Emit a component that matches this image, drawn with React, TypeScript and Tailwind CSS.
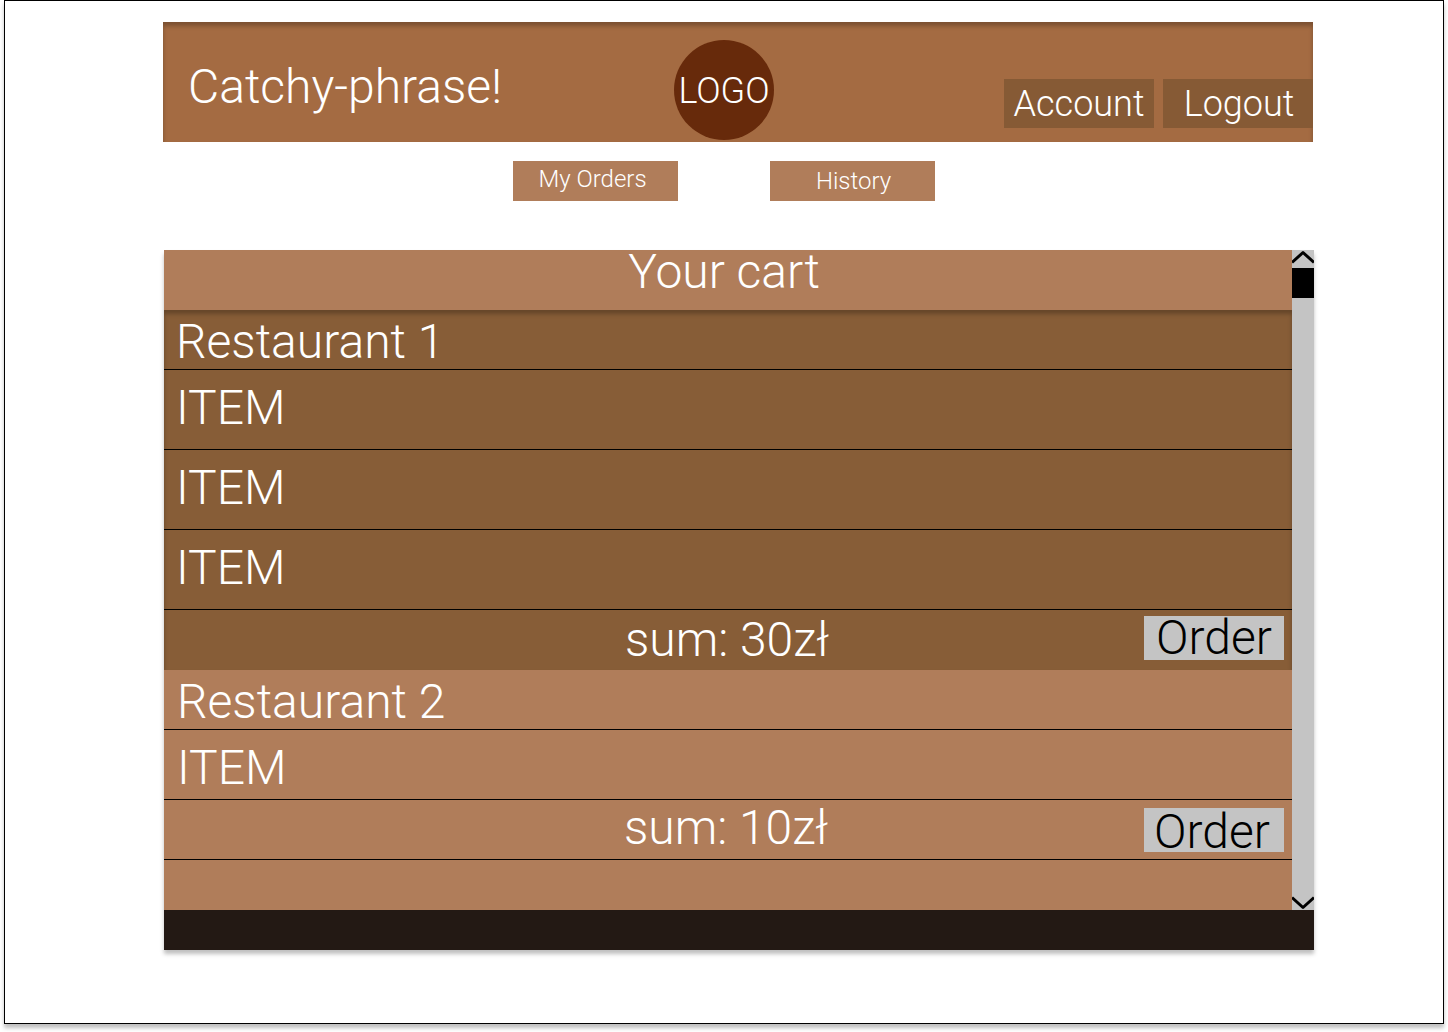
import React from "react";

function Item({ compact = false }: { compact?: boolean }) {
  return (
    <li className={`flex items-center border-b border-black text-5xl ${compact ? "h-[70px] pt-1.5 pl-[13px]" : "h-20 pb-1 pl-3"}`}>ITEM</li>
  );
}

function OrderButton({ label, className }: { label: string; className: string }) {
  return (
    <button type="button" aria-label={label} className={`flex h-11 w-[140px] items-center justify-center justify-self-end bg-[#c4c4c4] text-5xl leading-none text-black ${className}`}>
      Order
    </button>
  );
}

function Chevron({ down = false }: { down?: boolean }) {
  return (
    <svg viewBox="0 0 22 14" className="h-3.5 w-[22px]" fill="none" stroke="black" strokeWidth="3" strokeLinejoin="round">
      <path d={down ? "M0 1.5L11 11.5L22 1.5" : "M0 12.5L11 2.5L22 12.5"} />
    </svg>
  );
}

export default function App() {
  return (
    <div className="pr-1 pl-1 pb-2 font-['Roboto',sans-serif] font-light text-white">
      <div className="flex min-h-[1024px] flex-col border border-black bg-white pt-[21px] shadow-[0_4px_4px_rgba(0,0,0,0.25)]">
        <header className="mr-[130px] ml-[158px] grid h-[120px] grid-cols-[1fr_128px_1fr] bg-[#a46b42] shadow-[inset_0_4px_4px_rgba(0,0,0,0.25)]">
          <h1 className="pt-8 pl-[25px] text-5xl leading-[66px]">Catchy-phrase!</h1>
          <div className="mt-[18px] flex size-[100px] items-center justify-center rounded-full bg-[#672a0b] pt-0.5 text-4xl">LOGO</div>
          <nav className="mt-[57px] flex justify-end gap-[9px] text-4xl">
            <button type="button" className="h-[49px] w-[150px] bg-[#865a35]">Account</button>
            <button type="button" className="h-[49px] w-[150px] bg-[#865a35] pl-0.5">Logout</button>
          </nav>
        </header>
        <nav className="mt-[19px] flex justify-center gap-[92px] text-2xl">
          <button type="button" className="h-10 w-[165px] bg-[#b07d5a] pr-1.5 pb-1">My Orders</button>
          <button type="button" className="h-10 w-[165px] bg-[#b07d5a] pl-0.5">History</button>
        </nav>
        <main className="mt-[49px] mr-[129px] ml-[159px] shadow-[0_4px_4px_rgba(0,0,0,0.25)]">
          <div className="flex">
            <div className="flex-1 bg-[#b07d5a]">
              <h2 className="h-[60px] pr-2 text-center text-5xl leading-[44px]">Your cart</h2>
              <section className="bg-[#875d37] shadow-[inset_0_4px_4px_rgba(0,0,0,0.25)]">
                <h3 className="h-[60px] border-b border-black pl-3 text-5xl leading-[64px]">Restaurant 1</h3>
                <ul><Item /><Item /><Item /></ul>
                <div className="grid h-[60px] grid-cols-[1fr_auto_1fr] items-center pr-2 pl-1.5 text-5xl">
                  <p className="col-start-2">sum: 30zł</p>
                  <OrderButton label="Order from Restaurant 1" className="mb-1" />
                </div>
              </section>
              <section>
                <h3 className="h-[60px] border-b border-black pl-[13px] text-5xl leading-[64px]">Restaurant 2</h3>
                <ul><Item compact /></ul>
                <div className="grid h-[60px] grid-cols-[1fr_auto_1fr] items-center border-b border-black pr-2 pl-1 text-5xl">
                  <p className="col-start-2 pb-1">sum: 10zł</p>
                  <OrderButton label="Order from Restaurant 2" className="pt-1 pr-1" />
                </div>
              </section>
              <div className="h-[50px]" />
            </div>
            <div className="flex w-[22px] flex-col bg-[#c4c4c4]">
              <button type="button" aria-label="Scroll up" className="flex h-[18px] items-start"><Chevron /></button>
              <div className="h-[30px] bg-black" />
              <button type="button" aria-label="Scroll down" className="mt-auto flex h-3.5 items-start"><Chevron down /></button>
            </div>
          </div>
          <div className="h-10 bg-[#231914]" />
        </main>
      </div>
    </div>
  );
}
